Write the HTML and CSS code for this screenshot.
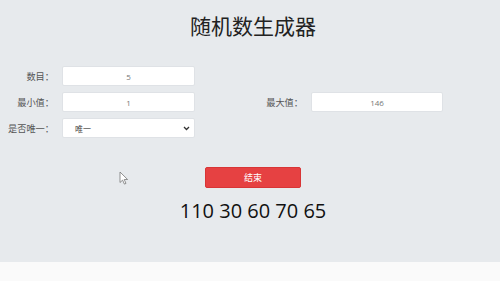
FILE: index.html
```html
<!DOCTYPE html>
<html lang="zh">
<head>
<meta charset="utf-8">
<link rel="stylesheet" href="styles.css">
<title>随机数生成器</title>
</head>
<body>
<main class="app">
  <h1 class="title">随机数生成器</h1>
  <form class="form">
    <label class="lbl">数目：</label>
    <div class="field">5</div>
    <span></span><span></span>
    <label class="lbl">最小值：</label>
    <div class="field">1</div>
    <label class="lbl">最大值：</label>
    <div class="field">146</div>
    <label class="lbl">是否唯一：</label>
    <div class="field select"><span>唯一</span><svg class="chev" width="7" height="5" viewBox="0 0 7 5"><path d="M1 1l2.5 2.5L6 1" fill="none" stroke="#333" stroke-width="1.3"/></svg></div>
  </form>
  <div class="actions"><button class="btn" type="button">结束</button></div>
  <div class="result">110 30 60 70 65</div>
  <svg class="cursor" width="10" height="14" viewBox="0 0 10 14"><path d="M1 1v10.5l2.6-2.4 1.8 4 1.6-.7-1.8-3.9h3.4z" fill="#fff" stroke="#777" stroke-width="0.8"/></svg>
</main>
<footer class="foot"></footer>
</body>
</html>
```
FILE: styles.css
```css
html, body { margin: 0; padding: 0; }
body {
  width: 500px; height: 281px; overflow: hidden;
  font-family: "Noto Sans CJK SC", "Noto Sans", sans-serif;
  background: #fafafa;
}
.app {
  position: relative;
  height: 262px;
  background: #e7eaed;
  box-sizing: border-box;
  padding-top: 11px;
}
.title {
  margin: 0 0 0 6px;
  text-align: center;
  font-size: 21px;
  font-weight: 400;
  line-height: 28px;
  color: #222;
}
.form {
  margin-top: 27px;
  display: grid;
  grid-template-columns: 52px 133px 100px 132px;
  column-gap: 8px;
  row-gap: 6px;
  grid-auto-rows: 20px;
  padding-left: 2px;
}
.lbl {
  font-size: 9.2px;
  color: #555;
  text-align: right;
  align-self: center;
  white-space: nowrap;
}
.field {
  background: #fff;
  border: 1px solid #dfe2e6;
  border-radius: 2px;
  box-sizing: border-box;
  font-family: "Open Sans", "Noto Sans CJK SC", sans-serif;
  font-size: 8px;
  color: #777;
  display: flex;
  align-items: center;
  justify-content: center;
}
.select {
  justify-content: space-between;
  padding: 0 4px 0 12px;
  color: #444;
  font-family: "Noto Sans CJK SC", sans-serif;
}
.actions {
  margin-top: 29px;
  padding-left: 6px;
  display: flex;
  justify-content: center;
}
.btn {
  width: 96px; height: 21px;
  background: #e64142;
  color: #fff;
  border: 1px solid #d83536;
  border-radius: 2px;
  font-family: "Noto Sans CJK SC", sans-serif;
  font-size: 9px;
  padding: 0;
}
.result {
  margin-top: 10px;
  padding-left: 6px;
  text-align: center;
  font-family: "Open Sans", sans-serif;
  font-size: 20px;
  line-height: 26px;
  color: #111;
}
.cursor {
  position: absolute;
  left: 119px;
  top: 171px;
}
.foot { height: 19px; background: #fafafa; }
```
